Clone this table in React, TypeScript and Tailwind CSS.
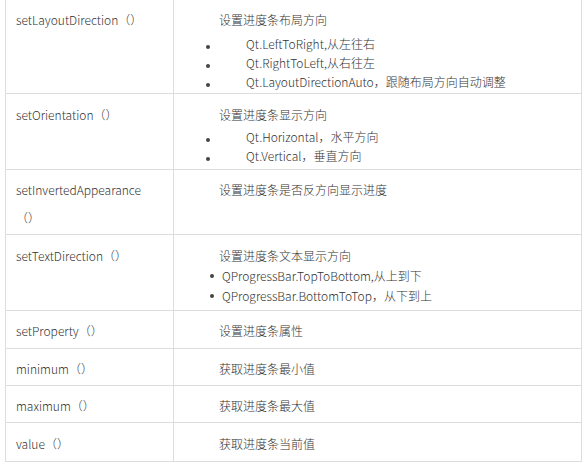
const font = { fontFamily: '"Noto Sans CJK SC", "Noto Sans", sans-serif' };

type Row = {
	name: React.ReactNode;
	h: string;
	pt: string;
	content: React.ReactNode;
};

function Dot() {
	return <span className="inline-block h-[4px] w-[4px] shrink-0 rounded-full bg-[#444]" />;
}

function WideItem({ children }: { children: React.ReactNode }) {
	return (
		<div className="flex items-center leading-[19px]">
			<span className="flex w-[72px] justify-center">
				<span className="ml-[-4px]">
					<Dot />
				</span>
			</span>
			<span>{children}</span>
		</div>
	);
}

function NarrowItem({ children }: { children: React.ReactNode }) {
	return (
		<div className="flex items-center gap-[8px] pl-[36px] leading-[20px]">
			<Dot />
			<span>{children}</span>
		</div>
	);
}

const rows: Row[] = [
	{
		name: "setLayoutDirection（）",
		h: "h-[94px]",
		pt: "pt-[10px]",
		content: (
			<>
				<div className="pl-[45px] leading-[20px]">设置进度条布局方向</div>
				<div className="mt-[4px]">
					<WideItem>Qt.LeftToRight,从左往右</WideItem>
					<WideItem>Qt.RightToLeft,从右往左</WideItem>
					<WideItem>Qt.LayoutDirectionAuto，跟随布局方向自动调整</WideItem>
				</div>
			</>
		),
	},
	{
		name: "setOrientation（）",
		h: "h-[76px]",
		pt: "pt-[11px]",
		content: (
			<>
				<div className="pl-[45px] leading-[20px]">设置进度条显示方向</div>
				<div className="mt-[2px]">
					<WideItem>Qt.Horizontal，水平方向</WideItem>
					<WideItem>Qt.Vertical，垂直方向</WideItem>
				</div>
			</>
		),
	},
	{
		name: (
			<span className="block leading-[28px]">
				setInvertedAppearance
				<br />（）
			</span>
		),
		h: "h-[65px]",
		pt: "pt-[10px]",
		content: <div className="pl-[45px] leading-[20px]">设置进度条是否反方向显示进度</div>,
	},
	{
		name: "setTextDirection（）",
		h: "h-[76px]",
		pt: "pt-[11px]",
		content: (
			<>
				<div className="pl-[45px] leading-[20px]">设置进度条文本显示方向</div>
				<div>
					<NarrowItem>QProgressBar.TopToBottom,从上到下</NarrowItem>
					<NarrowItem>QProgressBar.BottomToTop，从下到上</NarrowItem>
				</div>
			</>
		),
	},
	{
		name: "setProperty（）",
		h: "h-[38px]",
		pt: "pt-[10px]",
		content: <div className="pl-[45px] leading-[20px]">设置进度条属性</div>,
	},
	{
		name: "minimum（）",
		h: "h-[37px]",
		pt: "pt-[10px]",
		content: <div className="pl-[45px] leading-[20px]">获取进度条最小值</div>,
	},
	{
		name: "maximum（）",
		h: "h-[37px]",
		pt: "pt-[10px]",
		content: <div className="pl-[45px] leading-[20px]">获取进度条最大值</div>,
	},
	{
		name: "value（）",
		h: "h-[39px]",
		pt: "pt-[11px]",
		content: <div className="pl-[45px] leading-[20px]">获取进度条当前值</div>,
	},
];

export default function App() {
	return (
		<div className="h-[467px] w-[588px] bg-white text-[12px] font-light text-[#333]" style={font}>
			<div className="ml-[5px] w-[577px] border-x border-[#dddddd]">
				{rows.map((row, i) => (
					<div key={i} className={`flex border-b border-[#dddddd] ${row.h}`}>
						<div className={`w-[168px] shrink-0 border-r border-[#dddddd] pl-[10px] ${i === 2 ? "pt-[6px]" : row.pt}`}>
							{i === 2 ? row.name : <div className="leading-[20px]">{row.name}</div>}
						</div>
						<div className={`flex-1 ${row.pt}`}>{row.content}</div>
					</div>
				))}
			</div>
		</div>
	);
}
